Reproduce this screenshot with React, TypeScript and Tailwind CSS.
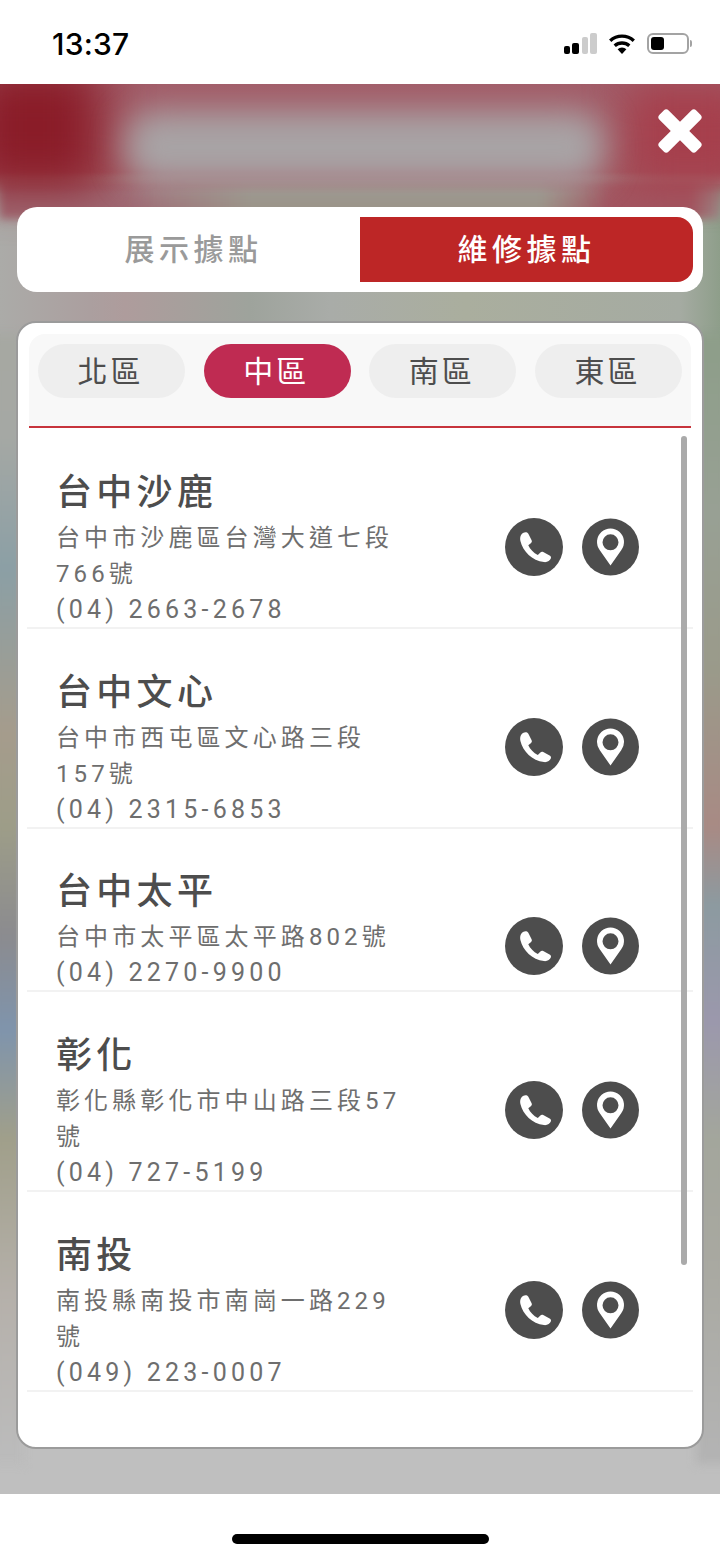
const font = { fontFamily: '"Roboto", "Noto Sans CJK TC", "Liberation Sans", sans-serif' };

const stores = [
  { name: "台中沙鹿", addr: ["台中市沙鹿區台灣大道七段", "766號"], tel: "(04) 2663-2678" },
  { name: "台中文心", addr: ["台中市西屯區文心路三段", "157號"], tel: "(04) 2315-6853" },
  { name: "台中太平", addr: ["台中市太平區太平路802號"], tel: "(04) 2270-9900" },
  { name: "彰化", addr: ["彰化縣彰化市中山路三段57", "號"], tel: "(04) 727-5199" },
  { name: "南投", addr: ["南投縣南投市南崗一路229", "號"], tel: "(049) 223-0007" },
];

function PhoneIcon() {
  return (
    <svg width="58" height="58" viewBox="0 0 58 58" className="shrink-0">
      <circle cx="29" cy="29" r="29" fill="#4d4d4d" />
      <path
        d="M15.800 17.500C17 15.200 19.300 14 21.300 14.300c1.100.2 1.800.9 2.300 1.900l3 6.100c.5 1 .3 1.900-.5 2.600l-2.800 2.300c1.800 4 5.300 7.700 9.500 9.900l2.600-2.600c.8-.8 1.800-.9 2.800-.4l6.400 3.400c1.200.6 1.700 1.700 1.300 2.800-.9 2.500-3.700 4.200-6.900 3.800C27.200 42.700 17.800 33.300 15.400 23c-.4-2-.3-3.900.4-5.500z"
        fill="#fff"
      />
    </svg>
  );
}

function PinIcon() {
  return (
    <svg width="57" height="58" viewBox="0 0 57 58" className="shrink-0">
      <circle cx="28.500" cy="29" r="28.500" fill="#4d4d4d" />
      <path
        fillRule="evenodd"
        d="M28.500 47.500 17.800 32.200A13.500 13.500 0 1 1 39.200 32.200L28.500 47.500zM28.500 32.300a8 8 0 1 0 0-16 8 8 0 0 0 0 16z"
        fill="#fff"
      />
    </svg>
  );
}

function StatusBar() {
  return (
    <div className="flex h-[84px] items-start justify-between bg-white pl-[52px] pr-[28px] pt-[27px]">
      <span
        className="text-[30px] font-medium leading-[34px] tracking-[0.2px] text-black"
        style={{ fontFamily: '"Inter", "Liberation Sans", sans-serif' }}
      >
        13:37
      </span>
      <div className="flex items-center pt-[6px]">
        <svg width="33" height="21" viewBox="0 0 33 21">
          <rect x="0" y="13" width="6" height="8" rx="2" fill="#000" />
          <rect x="8" y="10" width="7" height="11" rx="2" fill="#000" />
          <rect x="18" y="4" width="6" height="17" rx="2" fill="#ccc" />
          <rect x="26" y="0" width="7" height="21" rx="2" fill="#ccc" />
        </svg>
        <svg width="28" height="21" viewBox="0 0 28 21" className="ml-[11px]">
          <path d="M14 21 9.600 16.200a6.500 6.500 0 0 1 8.800 0L14 21z" fill="#000" />
          <path d="M6.700 12.700a11 11 0 0 1 14.600 0" fill="none" stroke="#000" strokeWidth="3.400" />
          <path d="M2.200 7.700a17.500 17.500 0 0 1 23.600 0" fill="none" stroke="#000" strokeWidth="3.400" />
        </svg>
        <div className="ml-[11px] flex items-center gap-[1px]">
          <div className="flex h-[21px] w-[42px] items-center rounded-[6px] border-2 border-[#a3a3a3] p-[2px]">
            <div className="h-full w-[13px] rounded-[3px] bg-black" />
          </div>
          <div className="h-[7px] w-[2px] rounded-r-full bg-[#a3a3a3]" />
        </div>
      </div>
    </div>
  );
}

function Backdrop() {
  return (
    <div aria-hidden className="absolute inset-0 overflow-hidden bg-[#a9aca4]">
      <div className="absolute inset-x-0 top-[100px] h-[160px] bg-[linear-gradient(90deg,#ababa8_0px,#ab9f9f_90px,#ae9c9c_125px,#9ea39c_250px,#a9aca8_330px,#aaae9e_465px,#a5aba2_680px,#8e9e8a_720px)]" />
      <div className="absolute inset-x-0 top-[95px] h-[40px] bg-[linear-gradient(90deg,#a06a74_0px,#a06a74_130px,#9a9488_250px,#9a9488_540px,#a25560_610px,#a25560_690px,#9a8a88_720px)] blur-[4px]" />
      <div className="absolute inset-x-0 bottom-0 h-[140px] bg-[#bfbfbf]" />
      <div className="absolute bottom-[30px] left-[-10px] top-[250px] w-[34px] bg-[linear-gradient(180deg,#a6a8a2_24px,#a5a8a4_102px,#8b9fa5_235px,#a59c8c_399px,#9d9d88_493px,#8b8b8f_602px,#7f94ac_696px,#a09f8a_805px,#b5b0aa_961px,#bbbbbb_1116px)] blur-[5px]" />
      <div className="absolute bottom-[30px] right-[-10px] top-[250px] w-[34px] bg-[linear-gradient(180deg,#8e9e8a_24px,#98a094_180px,#9a9a8a_336px,#a88a84_493px,#8c9aa0_571px,#9b98ac_688px,#a3a69c_805px,#a8a8a0_922px,#b3b3b3_1116px)] blur-[5px]" />
      <div className="absolute inset-x-0 top-0 h-[110px] bg-[linear-gradient(180deg,#a25c68_0%,#a2555f_80%,rgba(162,85,95,0)_100%)]" />
      <div className="absolute left-[-30px] top-[-20px] h-[125px] w-[130px] bg-[#8a1c28] blur-[24px]" />
      <div className="absolute right-[-30px] top-[0px] h-[100px] w-[120px] bg-[#a63f4c] blur-[20px]" />
      <div className="absolute left-[125px] top-[26px] h-[74px] w-[480px] rounded-[30px] bg-[#a8a3a5] blur-[16px]" />
    </div>
  );
}

export default function App() {
  return (
    <div className="flex h-[1559px] w-[720px] flex-col overflow-hidden bg-white" style={font}>
      <StatusBar />

      <main className="relative h-[1410px] shrink-0">
        <Backdrop />

        <div className="relative flex h-full flex-col">
          <div className="flex h-[123px] shrink-0 justify-end pr-[17px] pt-[24px]">
            <svg width="46" height="46" viewBox="0 0 46 46">
              <rect x="-3" y="16.500" width="52" height="13" rx="3.500" fill="#fff" transform="rotate(45 23 23)" />
              <rect x="-3" y="16.500" width="52" height="13" rx="3.500" fill="#fff" transform="rotate(-45 23 23)" />
            </svg>
          </div>

          {/* tabs */}
          <div className="ml-[17px] flex h-[85px] w-[686px] shrink-0 rounded-[20px] bg-white px-[10px] py-[10px]">
            <div className="flex w-[333px] items-center justify-center text-[30px] font-medium leading-none tracking-[4.500px] text-[#9a9a9a]">
              展示據點
            </div>
            <div className="flex flex-1 items-center justify-center rounded-r-[16px] bg-[#bd2626] text-[30px] font-medium leading-none tracking-[4.500px] text-white">
              維修據點
            </div>
          </div>

          {/* panel */}
          <div className="ml-[16px] mt-[29px] flex h-[1128px] w-[688px] shrink-0 flex-col rounded-[20px] border-2 border-[#9b9b9b] bg-white px-[11px] pt-[11px]">
            <div className="flex h-[94px] shrink-0 justify-between rounded-t-[16px] border-b-2 border-[#c7343c] bg-[#f8f8f8] px-[9px] pt-[10px]">
              {["北區", "中區", "南區", "東區"].map((area) => (
                <div
                  key={area}
                  className={
                    area === "中區"
                      ? "flex h-[54px] w-[147px] items-center justify-center rounded-full bg-[#bf2b52] pr-[2px] pt-[1px] text-[30px] leading-none tracking-[3px] text-white"
                      : "flex h-[54px] w-[147px] items-center justify-center rounded-full bg-[#eeeeee] pr-[2px] pt-[1px] text-[30px] leading-none tracking-[3px] text-[#4d4d4d]"
                  }
                >
                  {area}
                </div>
              ))}
            </div>

            <div className="relative">
              <div className="absolute right-[4px] top-[8px] h-[829px] w-[6px] rounded-full bg-[#aaaaaa]" />
              <div className="-mx-[2px] pt-[1px]">
                {stores.map((s) => (
                  <div
                    key={s.name}
                    className={
                      s.addr.length === 1
                        ? "flex items-start border-b-2 border-[#f2f2f2] pl-[29px] pr-[54px] pt-[39px]"
                        : "flex items-start border-b-2 border-[#f2f2f2] pl-[29px] pr-[54px] pt-[40px]"
                    }
                  >
                    <div className="-mb-[1px] flex-1">
                      <div className="mb-[3px] text-[36px] font-medium leading-[48px] tracking-[4.300px] text-[#4d4d4d]">
                        {s.name}
                      </div>
                      {s.addr.map((line) => (
                        <div key={line} className="text-[24px] leading-[36px] tracking-[4.100px] text-[#6e6e6e]">
                          {line}
                        </div>
                      ))}
                      <div className="text-[25px] leading-[36px] tracking-[4.200px] text-[#6e6e6e]">{s.tel}</div>
                    </div>
                    <div className="flex gap-[19px] pt-[49px]">
                      <PhoneIcon />
                      <PinIcon />
                    </div>
                  </div>
                ))}
              </div>
            </div>
          </div>
        </div>
      </main>

      <div className="flex flex-1 items-end justify-center bg-white pb-[15px]">
        <div className="h-[10px] w-[257px] rounded-full bg-black" />
      </div>
    </div>
  );
}
